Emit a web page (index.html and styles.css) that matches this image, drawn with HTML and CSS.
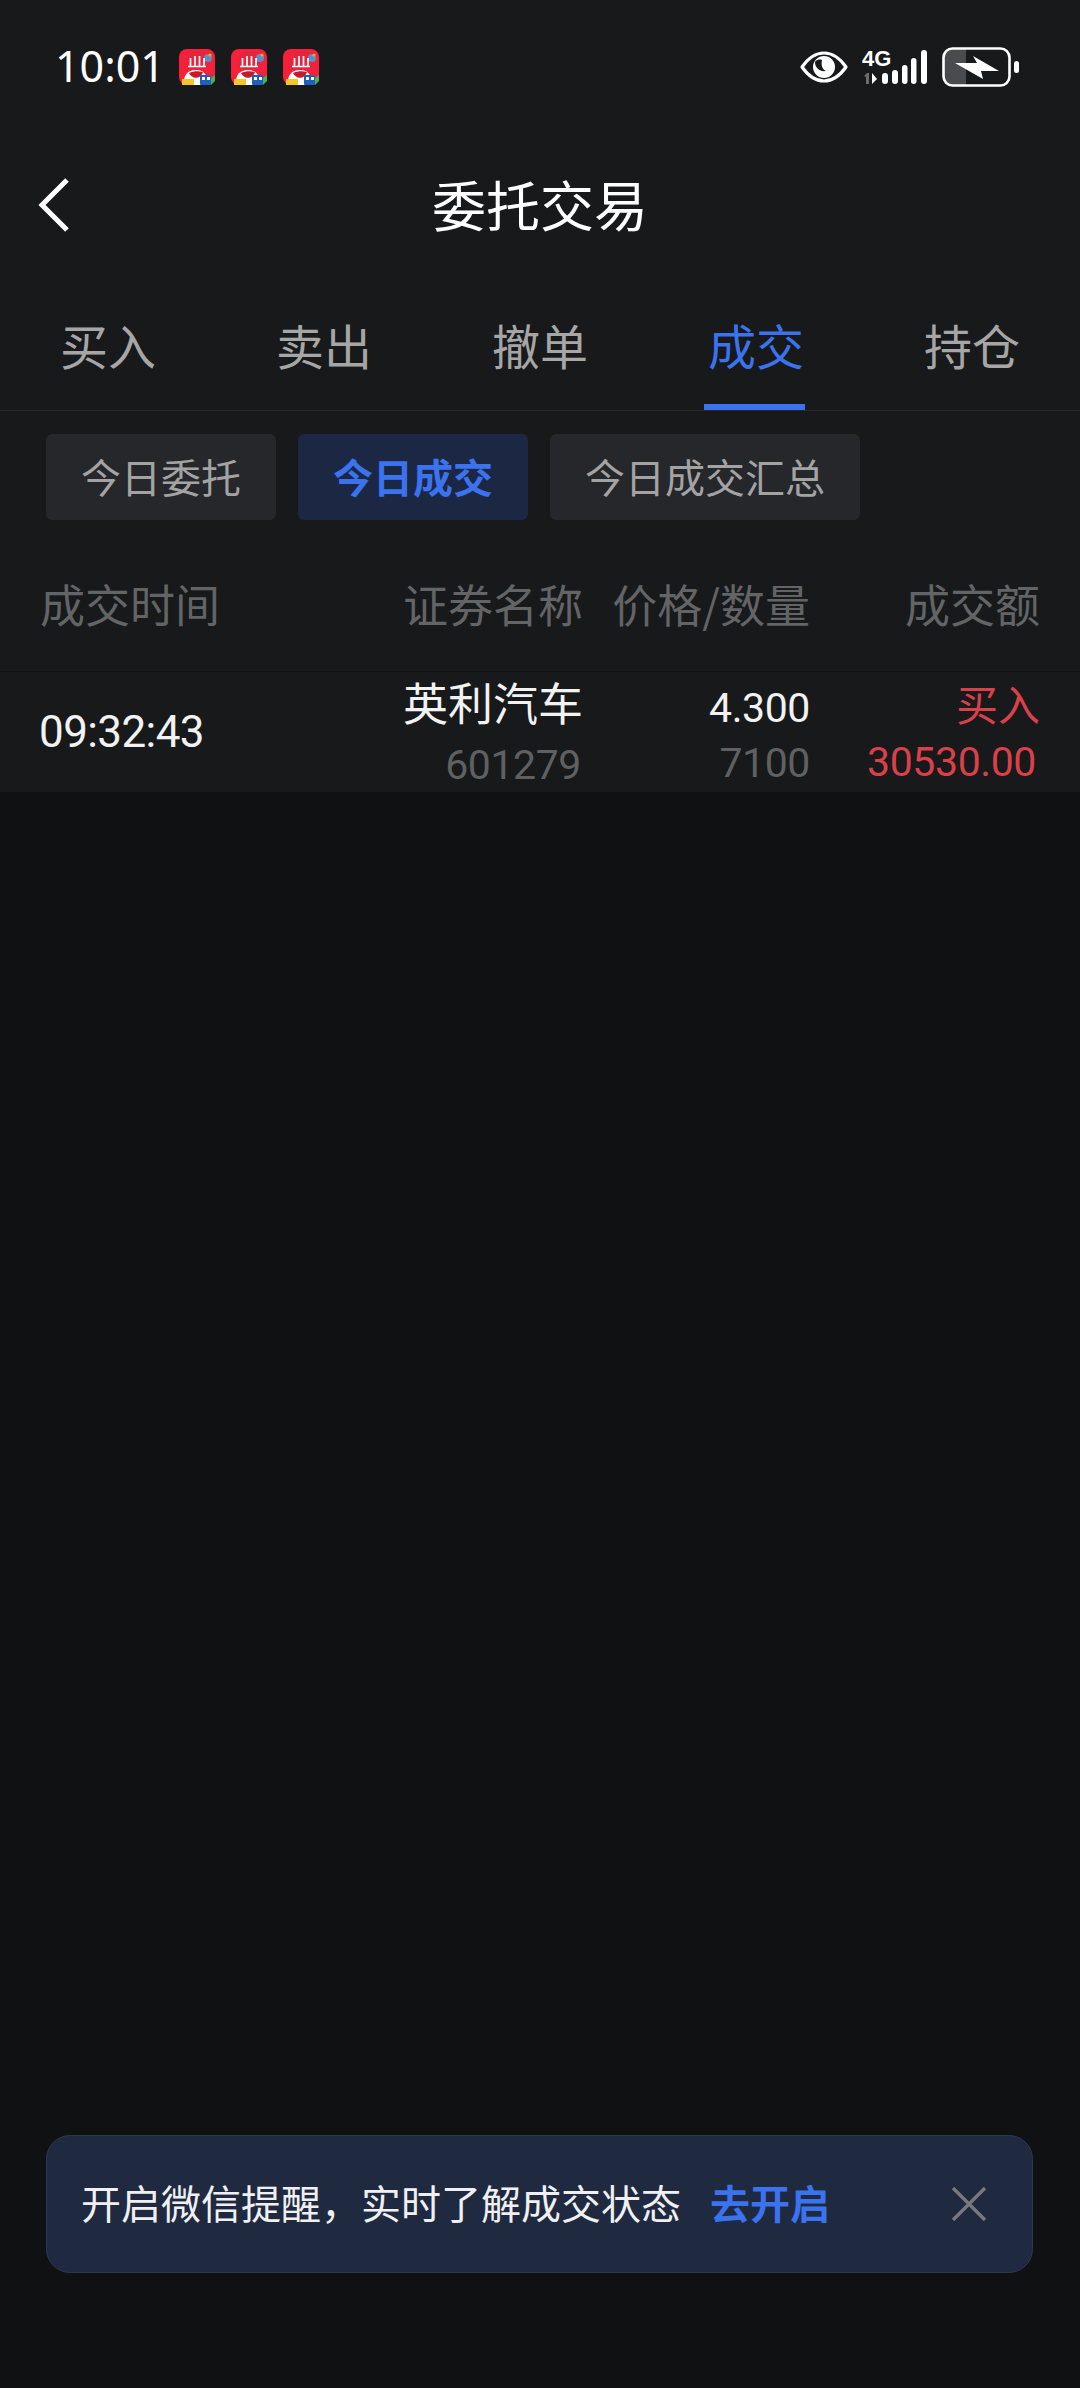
FILE: index.html
```html
<!DOCTYPE html>
<html lang="zh-CN">
<head>
  <meta charset="UTF-8" />
  <meta name="viewport" content="width=device-width, initial-scale=1.0"/>
  <title>委托交易</title>
  <link rel="stylesheet" href="styles.css">
</head>
<body>

  <svg class="sprites" width="0" height="0">
    <symbol id="appIcon" viewBox="0 0 36 36">
      <rect width="36" height="36" rx="8" fill="#f5203a"/>
      <path d="M7 19 C6 8 12 2 19 2 C26 2 30 9 28 19 Z" fill="#e5253d"/>
      <circle cx="29" cy="9" r="4" fill="#5b8fc9"/>
      <circle cx="31" cy="6" r="1.6" fill="#f0a030"/>
      <path d="M9 17.5 H27 M11.5 9 V18 M16 7 V18 M20.5 7 V18 M25 9 V18" stroke="#fff" stroke-width="1.7" fill="none"/>
      <path d="M5 36 C4 27 8 21 17 21 C26 21 29 27 28 36 Z" fill="#fff"/>
      <path d="M10 24 C14 22 20 22 24 23 C22 30 13 31 10 24 Z" fill="#c9182c"/>
      <rect x="3" y="30" width="12" height="6" fill="#f6c52a"/>
      <rect x="21" y="26" width="11" height="10" rx="1" fill="#1d5fc0"/>
      <rect x="23" y="28" width="3" height="3" fill="#fff"/>
      <rect x="28" y="28" width="3" height="3" fill="#fff"/>
      <path d="M32 29 L36 26 V32 L32 36 Z" fill="#4bb04f"/>
    </symbol>
  </svg>

  <div class="top">
    <div class="statusbar">
      <div class="status-left">
        <span class="clock">10:01</span>
        <svg class="app-icon"><use href="#appIcon"/></svg>
        <svg class="app-icon"><use href="#appIcon"/></svg>
        <svg class="app-icon"><use href="#appIcon"/></svg>
      </div>
      <div class="status-right">
        <svg class="eye" viewBox="0 0 48 32">
          <path d="M2 16 C9 6 16 2 24 2 S39 6 46 16 C39 26 32 30 24 30 S9 26 2 16 Z" fill="none" stroke="#fff" stroke-width="3.2" stroke-linejoin="round"/>
          <circle cx="24" cy="16" r="11" fill="#fff"/>
          <path d="M15 11 C15 17 20 21 26 20 C22 18 21 14 22 9 C19 8 16 9 15 11 Z" fill="#17191c"/>
        </svg>
        <svg class="signal" viewBox="0 -6 66 42">
          <text class="net" x="0" y="17">4G</text>
          <path d="M2 27 L5 24 H7 V35 H4 V28 Z" fill="#6b6c6e"/>
          <path d="M10 24 V35 L15 30 Z" fill="#fff"/>
          <rect x="20" y="24" width="6" height="11" rx="3" fill="#fff"/>
          <rect x="30" y="21" width="6" height="14" rx="3" fill="#fff"/>
          <rect x="40" y="16" width="5.5" height="19" rx="2.7" fill="#fff"/>
          <rect x="49" y="9" width="5.5" height="26" rx="2.7" fill="#fff"/>
          <rect x="59" y="1" width="6" height="34" rx="3" fill="#fff"/>
        </svg>
        <svg class="battery" viewBox="0 0 78 40">
          <rect x="2" y="2" width="20" height="36" rx="7" fill="#4a4b4e"/>
          <rect x="12" y="2" width="12" height="36" fill="#4a4b4e"/>
          <rect x="1.5" y="1.5" width="66" height="37" rx="9" fill="none" stroke="#fff" stroke-width="2.6"/>
          <path d="M13 16 L35 16 L31 9 L57 24 L39 24 L41 32 Z" fill="#fff"/>
          <rect x="72" y="14" width="5" height="12" rx="2.5" fill="#fff"/>
        </svg>
      </div>
    </div>

    <div class="titlebar">
      <svg class="back" viewBox="0 0 34 56">
        <path d="M30 3 L5 28 L30 53" fill="none" stroke="#fff" stroke-width="5"/>
      </svg>
      <h1>委托交易</h1>
    </div>

    <div class="tabs">
      <div class="tab">买入</div>
      <div class="tab">卖出</div>
      <div class="tab">撤单</div>
      <div class="tab active">成交</div>
      <div class="tab">持仓</div>
    </div>

    <div class="chips">
      <div class="chip">今日委托</div>
      <div class="chip active">今日成交</div>
      <div class="chip">今日成交汇总</div>
    </div>

    <div class="table-head">
      <div>成交时间</div>
      <div class="right">证券名称</div>
      <div class="right">价格/数量</div>
      <div class="right">成交额</div>
    </div>

    <div class="table-row">
      <div class="time">09:32:43</div>
      <div class="right stock">
        <div class="name">英利汽车</div>
        <div class="code">601279</div>
      </div>
      <div class="right price">
        <div class="val">4.300</div>
        <div class="qty">7100</div>
      </div>
      <div class="right amount">
        <div class="side">买入</div>
        <div class="total">30530.00</div>
      </div>
    </div>
  </div>

  <div class="toast">
    <span class="toast-text">开启微信提醒，实时了解成交状态</span>
    <span class="toast-link">去开启</span>
    <svg class="close" viewBox="0 0 36 34">
      <path d="M2 1 L34 33 M34 1 L2 33" stroke="#77797e" stroke-width="3.4"/>
    </svg>
  </div>

</body>
</html>
```

FILE: styles.css
```css
* { box-sizing: border-box; }

body {
  margin: 0;
  height: 2388px;
  position: relative;
  overflow: hidden;
  background: #0f1113;
  font-family: Roboto, 'Noto Sans CJK SC', sans-serif;
  color: #fff;
}

.sprites { position: absolute; }

.top { background: #17191b; }

/* status bar */
.statusbar {
  height: 134px;
  padding: 0 60px 0 55px;
  display: flex;
  justify-content: space-between;
  align-items: center;
}

.status-left {
  display: flex;
  align-items: center;
  gap: 16px;
}

.clock {
  font-family: 'Noto Sans', sans-serif;
  font-size: 43px;
  margin: 0 -2px 3px 0;
}

.app-icon {
  width: 36px;
  height: 36px;
}

.status-right {
  display: flex;
  align-items: center;
}

.eye {
  width: 48px;
  height: 32px;
  margin-right: 14px;
}

.signal {
  width: 66px;
  height: 42px;
  margin: 0 14px 6px 0;
}

.net {
  font-family: 'Liberation Sans', sans-serif;
  font-weight: bold;
  font-size: 22px;
  fill: #fff;
}

.battery {
  width: 78px;
  height: 40px;
}

/* title */
.titlebar {
  height: 142px;
  padding-bottom: 3px;
  position: relative;
  display: flex;
  justify-content: center;
  align-items: center;
}

.back {
  position: absolute;
  left: 37px;
  top: 43px;
  width: 34px;
  height: 56px;
}

h1 {
  margin: 0;
  font-family: 'Noto Sans CJK SC', sans-serif;
  font-size: 54px;
  font-weight: 400;
}

/* tabs */
.tabs {
  display: flex;
  height: 135px;
  border-bottom: 1px solid #26282b;
}

.tab {
  flex: 1;
  position: relative;
  display: flex;
  justify-content: center;
  align-items: center;
  padding-top: 2px;
  font-family: 'Noto Sans CJK SC', sans-serif;
  font-size: 48px;
  color: #a6a6a6;
}

.tab.active { color: #3b72ee; }

.tab.active::after {
  content: "";
  position: absolute;
  left: 56px;
  bottom: 0;
  width: 101px;
  height: 6px;
  background: #3b72ee;
}

/* sub filters */
.chips {
  display: flex;
  gap: 22px;
  padding: 23px 46px 0;
}

.chip {
  height: 86px;
  padding: 0 35px 3px;
  display: flex;
  align-items: center;
  border-radius: 6px;
  background: #25272b;
  font-family: 'Noto Sans CJK SC', sans-serif;
  font-size: 40px;
  color: #a3a3a3;
}

.chip.active {
  background: #1c2843;
  color: #3b72ee;
  font-weight: 700;
}

/* table */
.table-head,
.table-row {
  display: grid;
  grid-template-columns: 343px 200px 227px 230px;
  padding: 0 40px;
}

.table-head {
  height: 151px;
  padding-top: 55px;
  font-family: 'Noto Sans CJK SC', sans-serif;
  font-size: 45px;
  line-height: 58px;
  color: #636466;
}

.table-row {
  height: 121px;
  border-top: 1px solid #121316;
  align-items: center;
}

.right { text-align: right; }

.time {
  font-size: 44px;
  letter-spacing: -0.6px;
  margin: 0 0 3px -1px;
  color: #f2f2f2;
}

.name {
  font-family: 'Noto Sans CJK SC', sans-serif;
  font-size: 45px;
  line-height: 60px;
  color: #f2f2f2;
}

.code {
  font-size: 41px;
  letter-spacing: -0.4px;
  line-height: 60px;
  margin: 3px 2px 0 0;
  color: #5f6062;
}

.val {
  font-size: 41px;
  letter-spacing: -0.4px;
  line-height: 56px;
  margin-top: 4px;
  color: #f2f2f2;
}

.qty {
  font-size: 41px;
  letter-spacing: -0.4px;
  line-height: 56px;
  margin-top: -1px;
  color: #5f6062;
}

.side {
  font-family: 'Noto Sans CJK SC', sans-serif;
  font-size: 42px;
  line-height: 56px;
  margin-top: -2px;
  color: #d9404a;
}

.total {
  font-size: 41px;
  letter-spacing: -0.4px;
  line-height: 56px;
  margin: 3px 4px 0 0;
  color: #d9404a;
}

/* bottom prompt */
.toast {
  position: absolute;
  left: 46px;
  right: 47px;
  bottom: 115px;
  height: 138px;
  padding: 0 45px 0 34px;
  display: flex;
  align-items: center;
  background: #1f2a40;
  border: 1px solid #2b3750;
  border-radius: 24px;
  font-family: 'Noto Sans CJK SC', sans-serif;
  font-size: 40px;
}

.toast-text {
  color: #f0f0f2;
  margin-bottom: 4px;
}

.toast-link {
  margin: 0 0 4px 29px;
  color: #3b72ee;
  font-weight: 700;
}

.close {
  width: 36px;
  height: 34px;
  margin-left: auto;
}
```
